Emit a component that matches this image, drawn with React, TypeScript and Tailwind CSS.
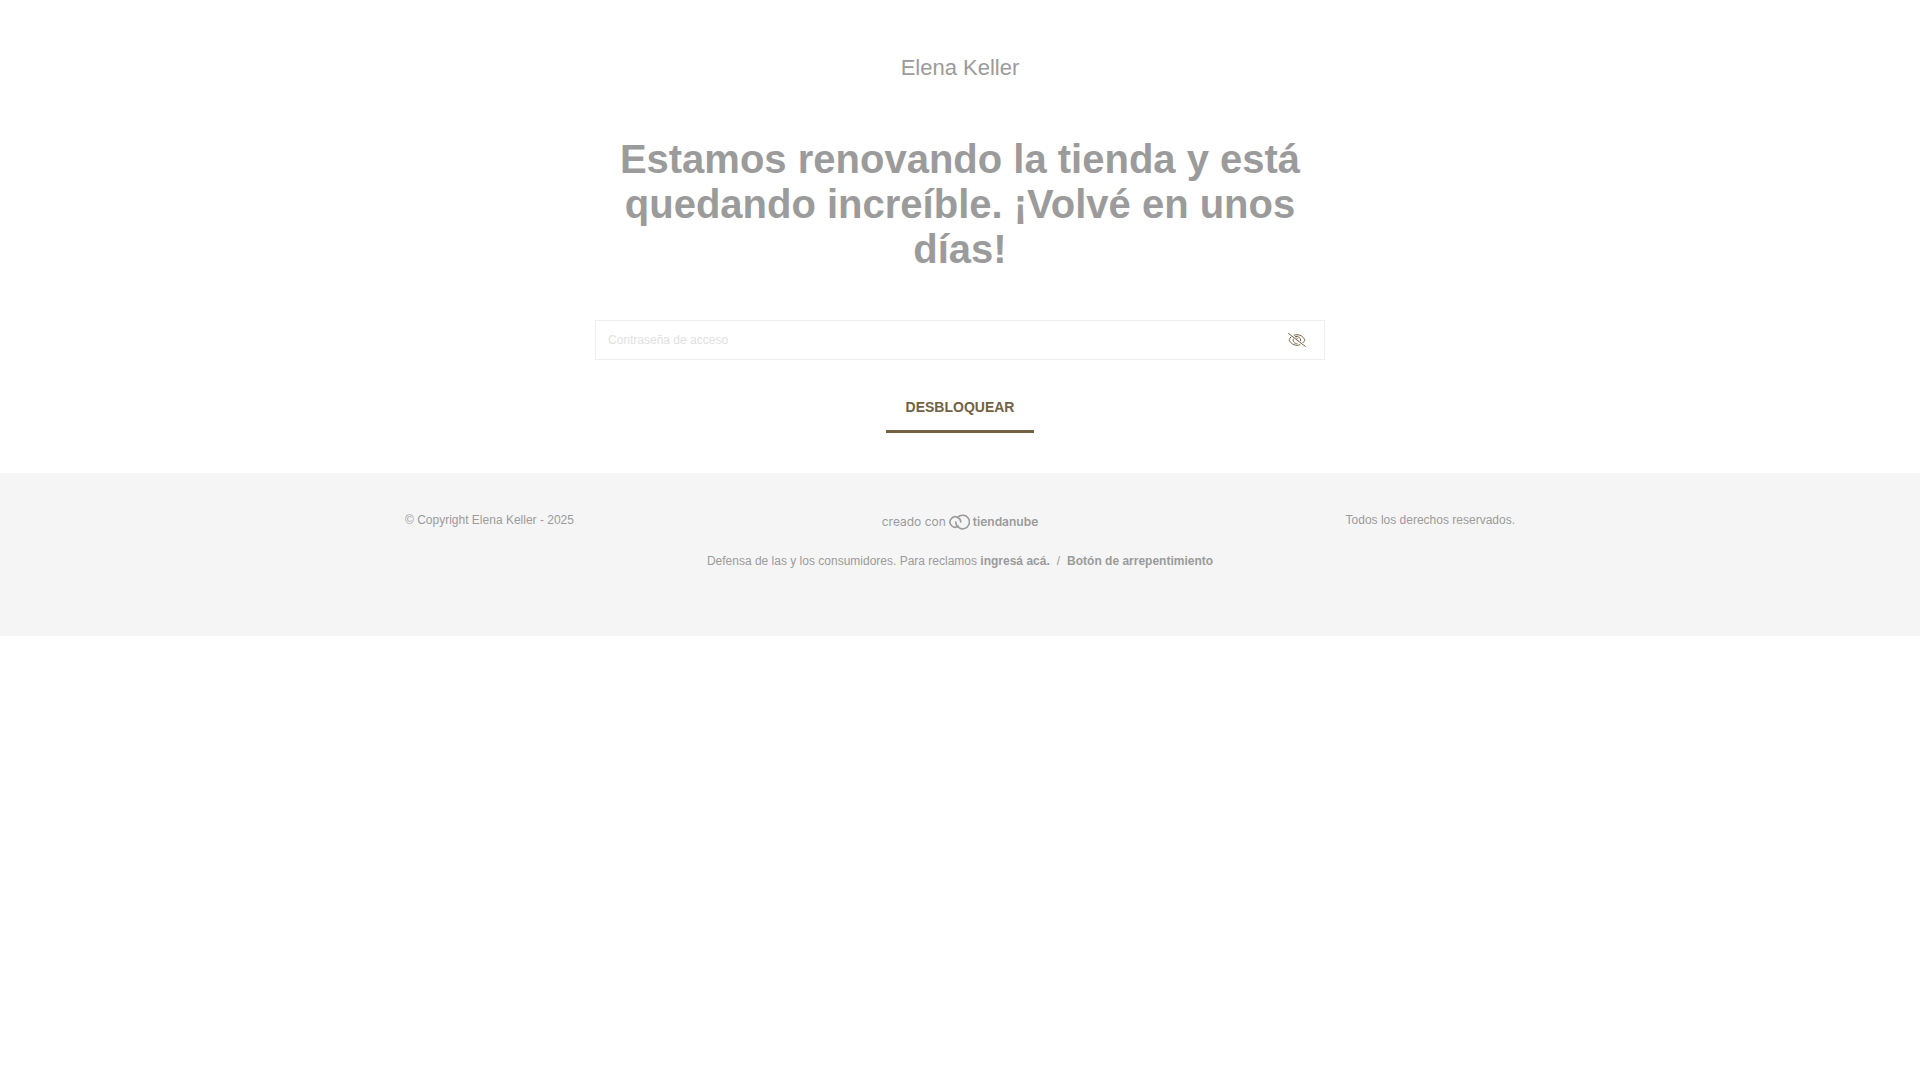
import { useState } from "react";

function EyeOffIcon() {
  return (
    <svg
      className="w-[18px] h-[14px]"
      viewBox="0 0 18 14"
      fill="none"
      stroke="currentColor"
      strokeLinecap="round"
      aria-hidden="true"
    >
      <path d="M0.7 0.6L17.3 13.4" />
      <path d="M2.9 4C2.2 4.8 1.7 5.7 1.4 6.4C1.2 6.8 1.2 7.2 1.4 7.6C2.8 10.3 5.6 12.3 9 12.3C10 12.3 11 12.1 11.9 11.8" />
      <path d="M6.1 2.2C7 1.9 8 1.7 9 1.7C12.4 1.7 15.2 3.7 16.6 6.4C16.8 6.8 16.8 7.2 16.6 7.6C16.2 8.4 15.7 9.1 15 9.7" />
      <path d="M5.3 6C4.6 8.5 6.4 10.7 9 10.7" />
      <path d="M7.3 3.7C10 2.6 13 4.6 12.7 7.8" />
      <path d="M8.9 4.9C9.6 5.6 9.2 6.3 8.6 6.5" />
    </svg>
  );
}

function CloudIcon() {
  return (
    <svg
      className="w-[21px] h-[16px]"
      viewBox="0 0 21 16"
      fill="none"
      stroke="currentColor"
      strokeWidth="1.6"
      strokeLinecap="round"
      aria-hidden="true"
    >
      <path d="M6.8 8A6.8 6.8 0 1 0 8.6 3.4" />
      <path d="M9.4 12.2A5.2 5.2 0 1 1 8.6 3.4C10.6 4.2 11.8 5.8 11.8 8" />
    </svg>
  );
}

export default function App() {
  const [password, setPassword] = useState("");
  const [visible, setVisible] = useState(false);

  return (
    <div className="font-['Liberation_Sans',Arial,sans-serif] text-xs text-[#9b9b9b]">
      <main className="mx-auto max-w-[760px] px-[15px] pt-[51px] pb-10 text-center">
        <a href="/" className="inline-block text-[22px] leading-[34px]">
          Elena Keller
        </a>

        <h1 className="mt-[52px] px-4 text-[40px] leading-[45px] font-bold">
          Estamos renovando la tienda y está quedando increíble. ¡Volvé en unos
          días!
        </h1>

        <form onSubmit={(e) => e.preventDefault()}>
          <div className="mt-12 flex h-10 items-center border border-[#eeeeee]">
            <input
              type={visible ? "text" : "password"}
              value={password}
              onChange={(e) => setPassword(e.target.value)}
              placeholder="Contraseña de acceso"
              aria-label="Contraseña de acceso"
              className="h-full min-w-0 flex-1 px-3 outline-none placeholder:text-[#e1e1e1]"
            />
            <button
              type="button"
              aria-label="Ver contraseña"
              onClick={() => setVisible(!visible)}
              className="flex h-full items-center px-[18px] text-[#726243]"
            >
              <EyeOffIcon />
            </button>
          </div>

          <button
            type="submit"
            className="mt-7 border-b-3 border-[#726243] px-5 pt-[9px] pb-[13px] text-sm font-bold text-[#726243] uppercase"
          >
            Desbloquear
          </button>
        </form>
      </main>

      <footer className="bg-[#f5f5f5] pt-10 pb-[66px]">
        <div className="mx-auto max-w-[1140px] px-[15px]">
          <div className="grid grid-cols-3">
            <p className="leading-[15px]">© Copyright Elena Keller - 2025</p>
            <a
              href="#tiendanube"
              className="flex items-center justify-center gap-[3px] pt-px font-['Inter',sans-serif] leading-4"
            >
              <span>creado con</span>
              <CloudIcon />
              <span className="font-semibold">tiendanube</span>
            </a>
            <p className="text-right leading-[15px]">
              Todos los derechos reservados.
            </p>
          </div>

          <p className="mt-[22px] text-center leading-[18px]">
            Defensa de las y los consumidores. Para reclamos{" "}
            <a href="#reclamos" className="font-bold">
              ingresá acá.
            </a>
            <span className="mx-[7px]">/</span>
            <a href="#arrepentimiento" className="font-bold">
              Botón de arrepentimiento
            </a>
          </p>
        </div>
      </footer>
    </div>
  );
}
